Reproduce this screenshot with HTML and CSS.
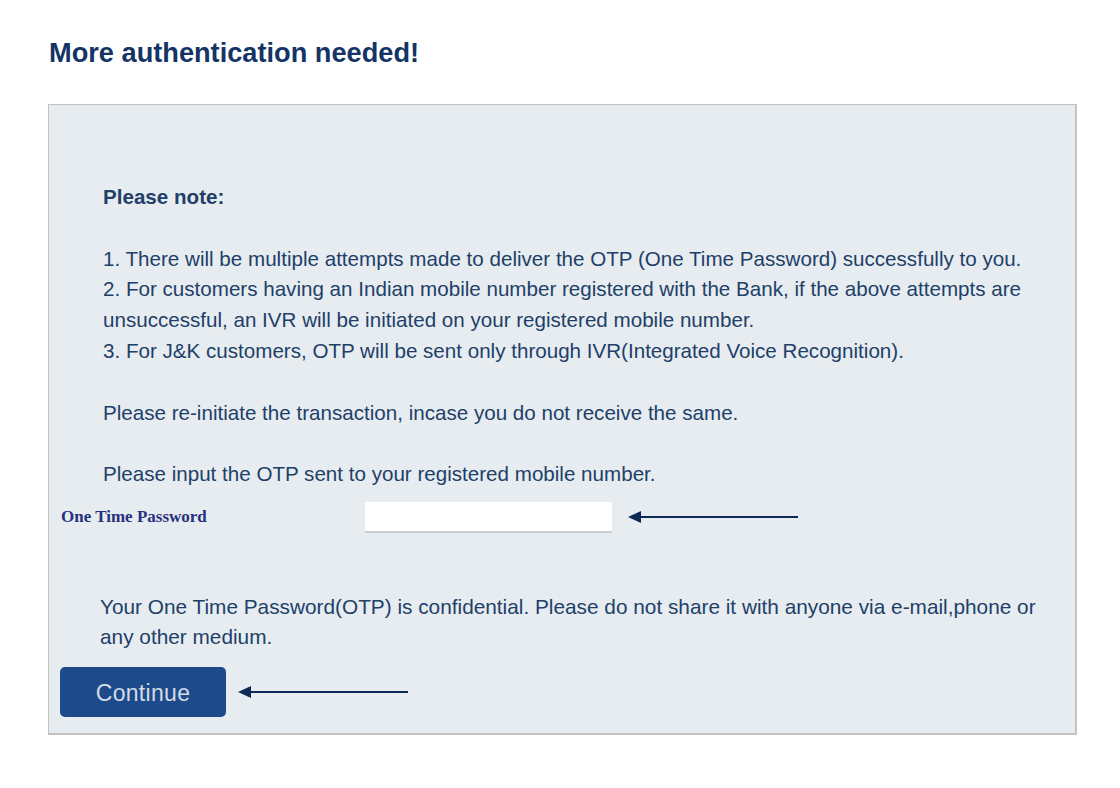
FILE: index.html
```html
<!DOCTYPE html>
<html>
<head>
<meta charset="utf-8">
<link rel="stylesheet" href="styles.css">
</head>
<body>
<div class="page">
  <h1 class="title">More authentication needed!</h1>
  <div class="panel">
    <div class="notes">
      <p class="note-head">Please note:</p>
      <p class="note-list">1. There will be multiple attempts made to deliver the OTP (One Time Password) successfully to you.<br>2. For customers having an Indian mobile number registered with the Bank, if the above attempts are unsuccessful, an IVR will be initiated on your registered mobile number.<br>3. For J&amp;K customers, OTP will be sent only through IVR(Integrated Voice Recognition).</p>
      <p class="note-line">Please re-initiate the transaction, incase you do not receive the same.</p>
      <p class="note-line">Please input the OTP sent to your registered mobile number.</p>
    </div>
    <div class="otp-row">
      <label class="otp-label">One Time Password</label>
      <input class="otp-input" type="password">
      <svg class="arrow arrow-input" width="172" height="14" viewBox="0 0 172 14"><polygon points="0,7 13,1 13,13" fill="#0d2a57"/><line x1="12" y1="7" x2="170" y2="7" stroke="#0d2a57" stroke-width="2"/></svg>
    </div>
    <p class="confidential">Your One Time Password(OTP) is confidential. Please do not share it with anyone via e-mail,phone or any other medium.</p>
    <div class="btn-row">
      <button class="continue">Continue</button>
      <svg class="arrow arrow-btn" width="172" height="14" viewBox="0 0 172 14"><polygon points="0,7 13,1 13,13" fill="#0d2a57"/><line x1="12" y1="7" x2="170" y2="7" stroke="#0d2a57" stroke-width="2"/></svg>
    </div>
  </div>
</div>
</body>
</html>
```
FILE: styles.css
```css
html, body {
  margin: 0;
  padding: 0;
  background: #ffffff;
}
.page {
  padding: 38px 0 0 48px;
  font-family: "Liberation Sans", Arial, sans-serif;
}
.title {
  margin: 0 0 36px 1px;
  font-size: 27.2px;
  line-height: 30px;
  font-weight: bold;
  color: #143466;
}
.panel {
  width: 1029px;
  box-sizing: border-box;
  border-style: solid;
  border-color: #c3c3c3;
  border-width: 1px 2px 2px 1px;
  background: #e7ecf0;
  padding: 77px 0 16px 0;
}
.notes {
  padding: 0 30px 0 54px;
  color: #213f69;
  font-size: 20.6px;
  line-height: 30.8px;
}
.notes p {
  margin: 0 0 30.8px 0;
}
.notes .note-head {
  font-weight: bold;
}
.notes p:last-child {
  margin-bottom: 0;
}
.otp-row {
  display: flex;
  align-items: center;
  margin-top: 12px;
  padding-left: 12px;
}
.otp-label {
  font-family: "Liberation Serif", "Times New Roman", serif;
  font-weight: bold;
  font-size: 17px;
  color: #29307f;
  width: 304px;
}
.otp-input {
  width: 247px;
  height: 31px;
  box-sizing: border-box;
  border: none;
  border-bottom: 2px solid #c9cdd2;
  background: #ffffff;
  margin: 0;
  padding: 0 4px;
}
.arrow {
  display: block;
}
.arrow-input {
  margin-left: 16px;
}
.confidential {
  margin: 59px 30px 0 51px;
  color: #213f69;
  font-size: 20.8px;
  line-height: 30px;
}
.btn-row {
  display: flex;
  align-items: center;
  margin-top: 15px;
  padding-left: 11px;
}
.continue {
  width: 166px;
  height: 50px;
  border: none;
  border-radius: 5px;
  background: #1c4a8b;
  color: #d5dbe5;
  font-family: "Liberation Sans", Arial, sans-serif;
  font-size: 23px;
  letter-spacing: 0.3px;
  padding: 3px 0 0 0;
  margin: 0;
}
.arrow-btn {
  margin-left: 12px;
}
```
